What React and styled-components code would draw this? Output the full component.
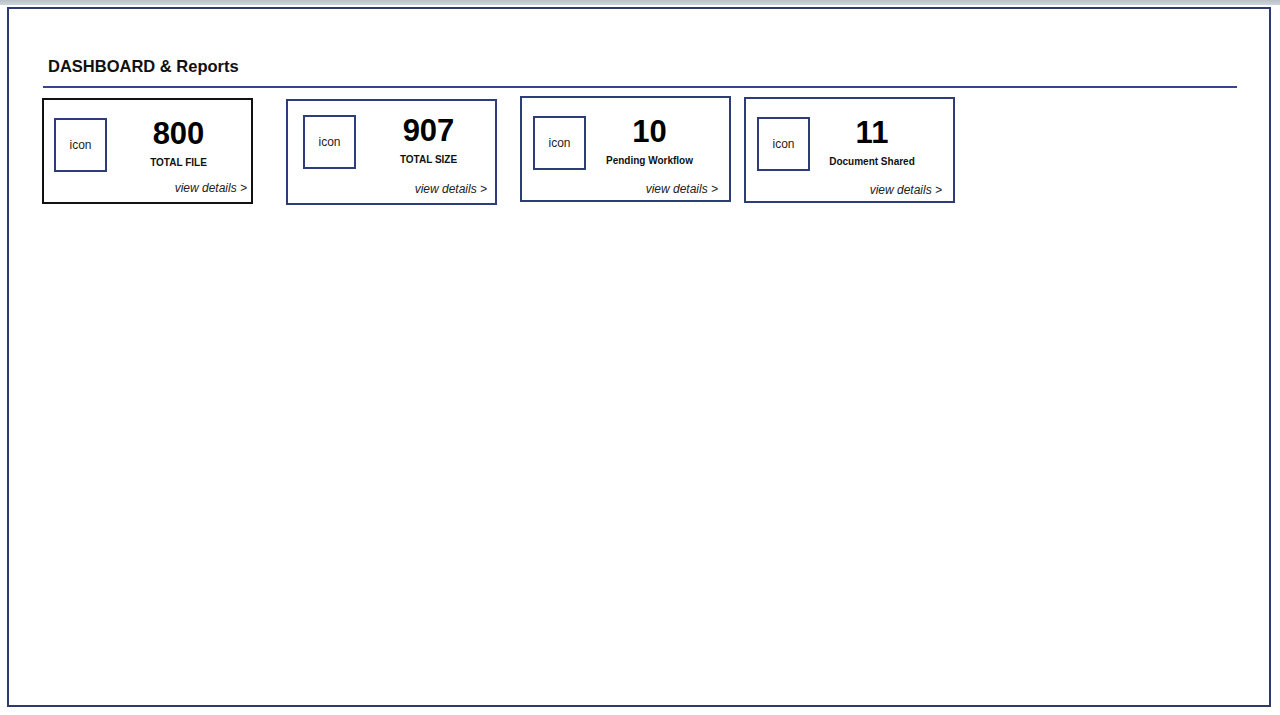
import React from 'react';
import styled, { createGlobalStyle } from 'styled-components';

const stats = [
  { id: 1, value: '800', label: 'TOTAL FILE', active: true, left: 0, top: 0, pad: [18, 4, 7, 10], colPad: [3, 0] },
  { id: 2, value: '907', label: 'TOTAL SIZE', left: 33, top: 1, pad: [14, 8, 7, 15], colPad: [14, 0] },
  { id: 3, value: '10', label: 'Pending Workflow', left: 23, top: -2, pad: [18, 11, 4, 11], colPad: [0, 5] },
  { id: 4, value: '11', label: 'Document Shared', left: 13, top: -1, pad: [18, 11, 4, 11], colPad: [0, 8] },
];

const App = () => {
  return (
    <>
      <GlobalStyle />
      <TopBar />
      <Frame>
        <Title>DASHBOARD &amp; Reports</Title>
        <Divider />
        <CardRow>
          {stats.map((item) => (
            <StatCard
              key={item.id}
              $active={item.active}
              $left={item.left}
              $top={item.top}
              $pad={item.pad}
            >
              <CardBody>
                <IconBox>icon</IconBox>
                <StatText $padLeft={item.colPad[0]} $padRight={item.colPad[1]}>
                  <StatValue>{item.value}</StatValue>
                  <StatLabel>{item.label}</StatLabel>
                </StatText>
              </CardBody>
              <ViewDetails>view details &gt;</ViewDetails>
            </StatCard>
          ))}
        </CardRow>
      </Frame>
    </>
  );
};

export default App;

const GlobalStyle = createGlobalStyle`
  html, body {
    margin: 0;
    padding: 0;
    background: #fff;
    font-family: "Liberation Sans", Arial, sans-serif;
    color: #111;
  }
  * {
    box-sizing: border-box;
  }
`;

const TopBar = styled.div`
  height: 5px;
  background: linear-gradient(180deg, #b9c0c8 0%, #cfd4da 100%);
`;

const Frame = styled.div`
  margin: 2px 9px 0 7px;
  height: 700px;
  border: 2px solid #2e3b6e;
  background: #fff;
  padding: 47px 32px 0 34px;
`;

const Title = styled.h1`
  margin: 0 0 0 5px;
  font-size: 16.5px;
  line-height: 20px;
  font-weight: 700;
  color: #111;
`;

const Divider = styled.div`
  margin-top: 10px;
  height: 2px;
  background: #34478a;
`;

const CardRow = styled.div`
  display: flex;
  align-items: flex-start;
  margin-top: 10px;
  margin-left: -1px;
`;

const StatCard = styled.div`
  display: flex;
  flex-direction: column;
  width: 211px;
  height: 106px;
  margin-left: ${(props) => props.$left}px;
  margin-top: ${(props) => props.$top}px;
  padding: ${(props) => props.$pad.map((v) => `${v}px`).join(' ')};
  border: 2px solid ${(props) => (props.$active ? '#111' : '#2c3d7a')};
  background: #fff;
`;

const CardBody = styled.div`
  display: flex;
  align-items: flex-start;
`;

const IconBox = styled.div`
  flex: 0 0 auto;
  display: flex;
  align-items: center;
  justify-content: center;
  width: 53px;
  height: 54px;
  border: 2px solid #2c3d7a;
  font-size: 12px;
  color: #222;
`;

const StatText = styled.div`
  flex: 1;
  display: flex;
  flex-direction: column;
  align-items: center;
  padding-left: ${(props) => props.$padLeft}px;
  padding-right: ${(props) => props.$padRight}px;
`;

const StatValue = styled.div`
  font-size: 31px;
  line-height: 32px;
  font-weight: 700;
  color: #000;
`;

const StatLabel = styled.div`
  margin-top: 7px;
  font-size: 10px;
  line-height: 12px;
  font-weight: 700;
  color: #111;
`;

const ViewDetails = styled.div`
  margin-top: auto;
  text-align: right;
  font-size: 12px;
  line-height: 14px;
  font-style: italic;
  color: #222;
`;
